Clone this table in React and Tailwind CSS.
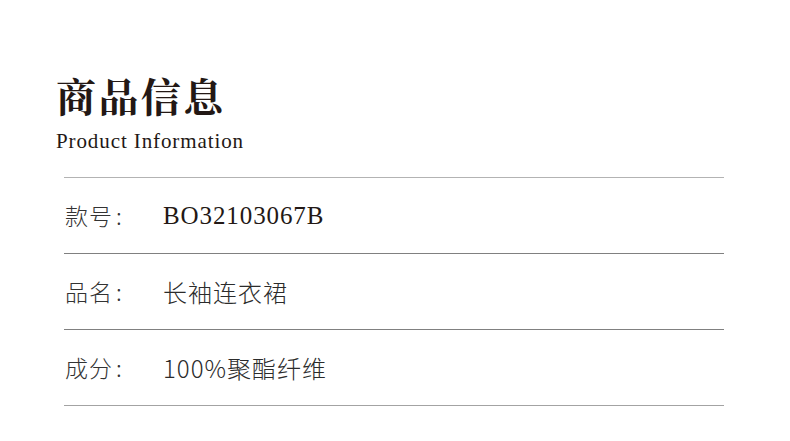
import React from "react";

const rows = [
  { label: "款号", value: "BO32103067B", serif: true },
  { label: "品名", value: "长袖连衣裙" },
  { label: "成分", value: "100%聚酯纤维" },
];

const App = () => {
  return (
    <div className="w-[790px] h-[441px] bg-white overflow-hidden">
      <div className="pt-[75px] pl-[56px]">
        <h1 className="text-[40px] leading-[40px] font-bold tracking-[2.4px] text-[#231815] [font-family:'Noto_Serif_CJK_SC','Noto_Sans_CJK_SC',serif]">
          商品信息
        </h1>
        <p className="mt-[16px] text-[21px] leading-[20px] tracking-[0.9px] text-[#231815] [font-family:'Liberation_Serif',serif]">
          Product Information
        </p>
      </div>

      {/* info table */}
      <div className="ml-[64px] mt-[26px] w-[660px] border-t border-[#b3b3b3]">
        {rows.map((row, i) => (
          <div
            key={i}
            className={`flex items-center h-[76px] border-b ${
              i === rows.length - 1 ? "border-[#a3a3a3]" : "border-[#808080]"
            }`}
          >
            <div className="w-[99px] pl-[1px] text-[23px] tracking-[1px] text-[#333] [font-family:'Noto_Sans_CJK_SC',sans-serif] font-light">
              {row.label}
              <span className="ml-[3px]">:</span>
            </div>
            {row.serif ? (
              <div className="text-[25px] tracking-[0.9px] text-[#231815] [font-family:'Liberation_Serif',serif]">
                {row.value}
              </div>
            ) : (
              <div className="text-[24px] tracking-[1px] text-[#2b2b2b] [font-family:'Noto_Sans_CJK_SC',sans-serif] font-light">
                {row.value}
              </div>
            )}
          </div>
        ))}
      </div>
    </div>
  );
};

export default App;
